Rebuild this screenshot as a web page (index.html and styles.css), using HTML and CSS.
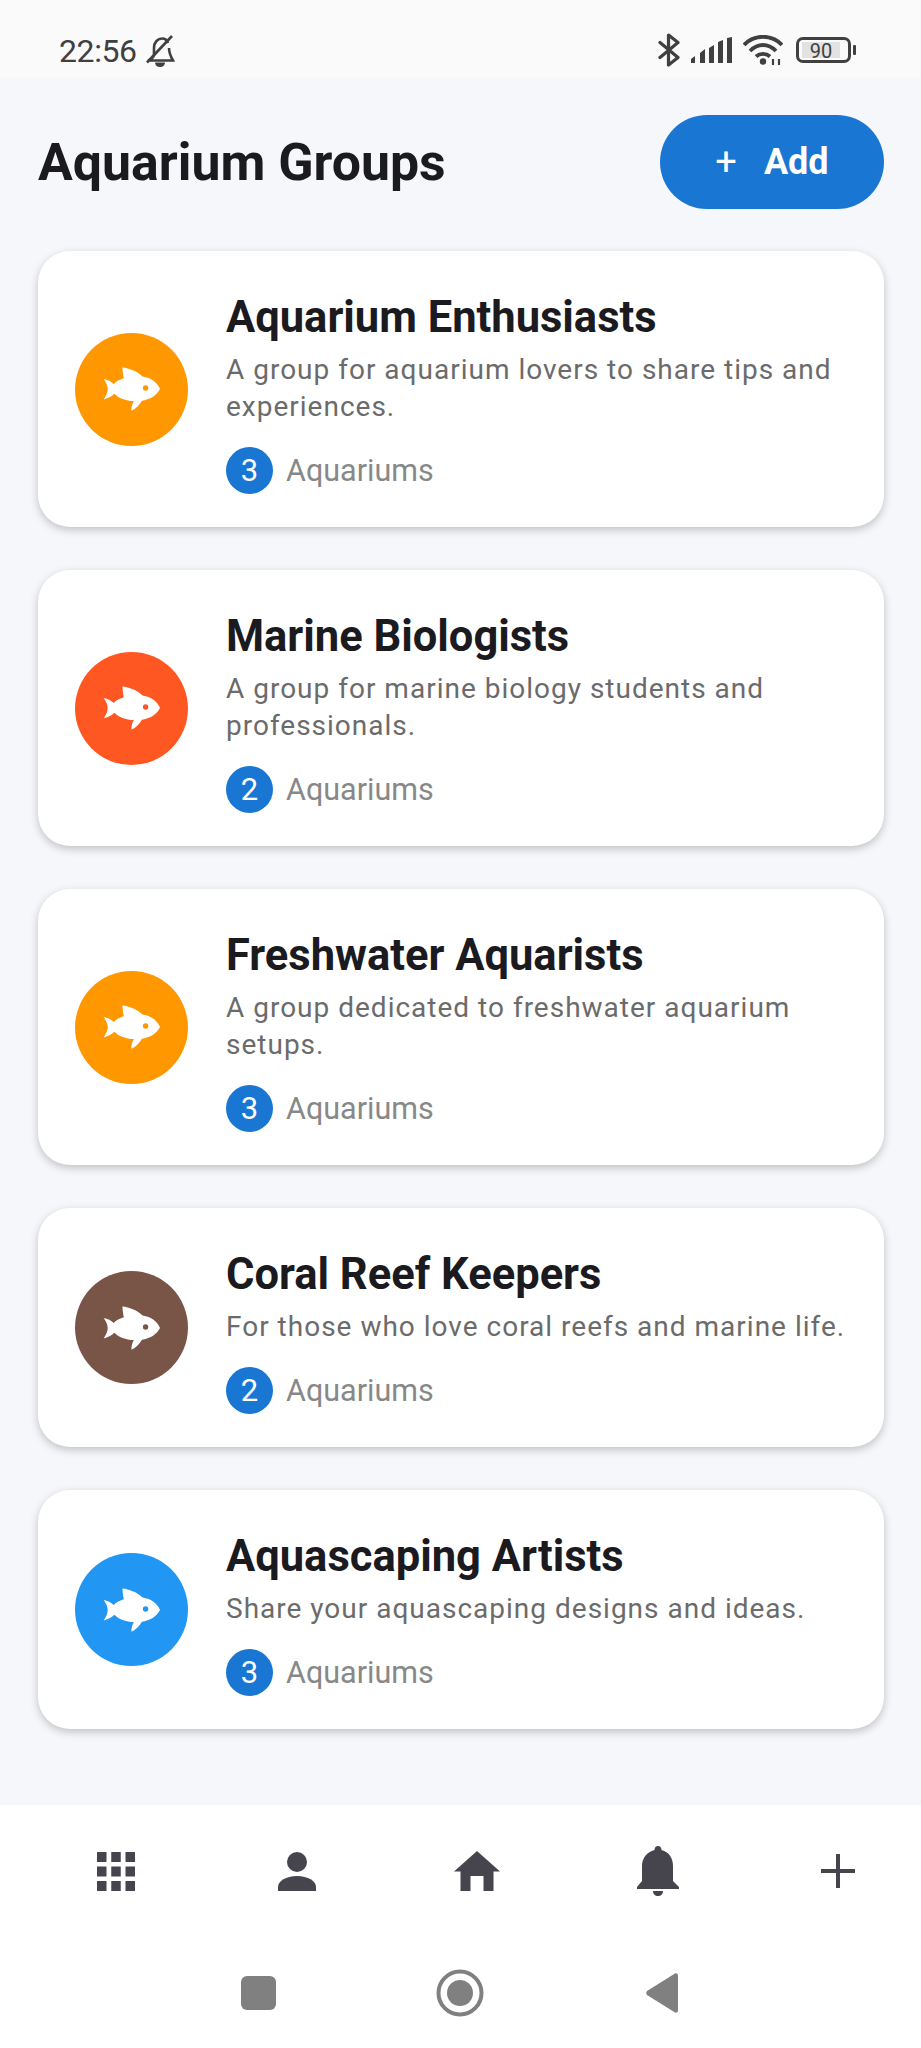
FILE: index.html
```html
<!DOCTYPE html>
<html>
	<head>
		<title>Aquarium Groups</title>
		<link rel="stylesheet" href="styles.css">
	</head>
	<body>
		<svg class="defs" width="0" height="0">
			<symbol id="fish" viewBox="0 0 170 130">
				<path fill-rule="evenodd" d="M2 35C14 37 24 42 32 50C38 43 48 37 62 33C60 22 58 10 58 1C78 3 100 11 118 28C144 32 162 46 170 65C160 84 140 97 116 100C108 113 98 124 85 130C84 120 87 110 92 101C68 100 46 92 34 79C25 87 14 93 2 96C9 86 14 76 14 65C14 55 9 45 2 35ZM127 54A8 8 0 1 0 127 70A8 8 0 1 0 127 54Z"/>
			</symbol>
		</svg>

		<div class="status">
			<span class="time">22:56</span>
			<svg class="mute" viewBox="0 0 30 32">
				<path d="M9 21V13C9 7 13 3.500 17 3.500C20 3.500 22 5 23 8M24 13C24 18 26 22 28 25.500H3C5 25 7 24 9 21" fill="none" stroke="#404040" stroke-width="2.600"/>
				<path d="M2 27.500L27 1" stroke="#404040" stroke-width="2.600"/>
				<path d="M10 27.500H20C20 30 18 32 15 32C12 32 10 30 10 27.500Z" fill="#404040"/>
			</svg>
			<div class="status-right">
				<svg class="bt" viewBox="0 0 22 34">
					<path d="M2 9.500L20 24.500L10.500 32V2L20 9.500L2 24.500" fill="none" stroke="#404040" stroke-width="3.200" stroke-linejoin="round" stroke-linecap="round"/>
				</svg>
				<svg class="signal" viewBox="0 0 42 26">
					<path d="M0 26V22L4 19V26ZM9 26V16L14 12V26ZM18 26V11L23 8V26ZM27 26V5L32 3V26ZM36 26V1L41 0V26Z" fill="#404040"/>
				</svg>
				<svg class="wifi" viewBox="0 0 40 30">
					<path d="M1 10C11 -1 29 -1 39 10M7 16C15 8 25 8 33 16M13 21.500C17 18 23 18 27 21.500" fill="none" stroke="#404040" stroke-width="3.800"/>
					<circle cx="20" cy="26.500" r="3.200" fill="#404040"/>
					<path d="M30 24V30M36 24V30" stroke="#404040" stroke-width="2.200"/>
				</svg>
				<div class="battery"><span class="battery-fill">90</span></div>
				<div class="battery-tip"></div>
			</div>
		</div>

		<div class="main">
			<div class="header">
				<h1>Aquarium Groups</h1>
				<div class="add-btn"><span class="add-plus">+</span>Add</div>
			</div>

			<div class="card">
				<div class="avatar orange"><svg class="fish"><use href="#fish"/></svg></div>
				<div class="info">
					<h2>Aquarium Enthusiasts</h2>
					<p>A group for aquarium lovers to share tips and experiences.</p>
					<div class="count"><span class="badge">3</span>Aquariums</div>
				</div>
			</div>

			<div class="card">
				<div class="avatar red"><svg class="fish"><use href="#fish"/></svg></div>
				<div class="info">
					<h2>Marine Biologists</h2>
					<p>A group for marine biology students and professionals.</p>
					<div class="count"><span class="badge">2</span>Aquariums</div>
				</div>
			</div>

			<div class="card">
				<div class="avatar orange"><svg class="fish"><use href="#fish"/></svg></div>
				<div class="info">
					<h2>Freshwater Aquarists</h2>
					<p>A group dedicated to freshwater aquarium setups.</p>
					<div class="count"><span class="badge">3</span>Aquariums</div>
				</div>
			</div>

			<div class="card">
				<div class="avatar brown"><svg class="fish"><use href="#fish"/></svg></div>
				<div class="info">
					<h2>Coral Reef Keepers</h2>
					<p>For those who love coral reefs and marine life.</p>
					<div class="count"><span class="badge">2</span>Aquariums</div>
				</div>
			</div>

			<div class="card">
				<div class="avatar blue"><svg class="fish"><use href="#fish"/></svg></div>
				<div class="info">
					<h2>Aquascaping Artists</h2>
					<p>Share your aquascaping designs and ideas.</p>
					<div class="count"><span class="badge">3</span>Aquariums</div>
				</div>
			</div>
		</div>

		<div class="tabs">
			<div class="tab">
				<svg width="38" height="39" viewBox="0 0 38 39" fill="#46454d">
					<path d="M0 0H9.500V10H0ZM14.250 0H23.750V10H14.250ZM28.500 0H38V10H28.500ZM0 14.500H9.500V24.500H0ZM14.250 14.500H23.750V24.500H14.250ZM28.500 14.500H38V24.500H28.500ZM0 29H9.500V39H0ZM14.250 29H23.750V39H14.250ZM28.500 29H38V39H28.500Z"/>
				</svg>
			</div>
			<div class="tab">
				<svg width="38" height="39" viewBox="0 0 38 39" fill="#46454d">
					<ellipse cx="19" cy="10" rx="10" ry="10"/>
					<path d="M0 39V35C0 29 8 24 19 24C30 24 38 29 38 35V39Z"/>
				</svg>
			</div>
			<div class="tab">
				<svg width="46" height="40" viewBox="0 0 46 40" fill="#46454d">
					<path d="M23 0L46 20.500H39.500V40H29.500V25H16.500V40H6.500V20.500H0Z"/>
				</svg>
			</div>
			<div class="tab">
				<svg width="44" height="50" viewBox="0 0 44 50" fill="#46454d">
					<path d="M22 0C24 0 25.500 1.500 25.500 4C33 6 37 12 37 20V35L43 41V43H1V41L6 35V20C6 12 11 6 18.500 4C18.500 1.500 20 0 22 0Z"/>
					<path d="M17 45H27C27 48 25 50 22 50C19 50 17 48 17 45Z"/>
				</svg>
			</div>
			<div class="tab">
				<svg width="34" height="34" viewBox="0 0 34 34" fill="#46454d">
					<path d="M15 0H19V15H34V19H19V34H15V19H0V15H15Z"/>
				</svg>
			</div>
		</div>

		<div class="sysnav">
			<div class="sys-square"></div>
			<svg width="48" height="48" viewBox="0 0 48 48" fill="#808080">
				<circle cx="24" cy="24" r="21.500" fill="none" stroke="#808080" stroke-width="4"/>
				<circle cx="24" cy="24" r="13"/>
			</svg>
			<svg width="32" height="40" viewBox="0 0 32 40" fill="#808080">
				<path d="M29 0.500C31 0 32 1 32 3V37C32 39 31 40 29 39.500L1 22C0 21 0 19 1 18Z"/>
			</svg>
		</div>
	</body>
</html>
```

FILE: styles.css
```css
* {
	box-sizing: border-box;
}

html, body {
	margin: 0;
	padding: 0;
}

body {
	width: 921px;
	height: 2048px;
	overflow: hidden;
	background: #f5f7fb;
	font-family: Roboto, "Liberation Sans", sans-serif;
	display: flex;
	flex-direction: column;
}

.defs {
	position: absolute;
}

.status {
	height: 78px;
	background: #fafafa;
	display: flex;
	align-items: center;
	padding: 24px 65px 0 59px;
	flex-shrink: 0;
}

.time {
	font-size: 32px;
	color: #404040;
	letter-spacing: -0.4px;
}

.mute {
	width: 30px;
	height: 32px;
	margin-left: 8px;
}

.status-right {
	margin-left: auto;
	margin-bottom: 2px;
	display: flex;
	align-items: center;
}

.bt {
	width: 22px;
	height: 34px;
	margin-right: 11px;
}

.signal {
	width: 42px;
	height: 26px;
	margin-right: 10px;
}

.wifi {
	width: 40px;
	height: 30px;
	margin-right: 13px;
}

.battery {
	width: 55px;
	height: 26px;
	border: 3px solid #404040;
	border-radius: 7px;
	padding: 2px 3px;
	display: flex;
}

.battery-fill {
	background: #e2e2e2;
	flex: 1;
	margin-right: 5px;
	font-size: 20px;
	line-height: 18px;
	text-align: center;
	color: #404040;
}

.battery-tip {
	width: 3px;
	height: 10px;
	margin-left: 2px;
	background: #404040;
	border-radius: 1px;
}

.main {
	flex: 1;
	padding: 37px 37px 0 38px;
}

.header {
	display: flex;
	justify-content: space-between;
	align-items: center;
	margin-bottom: 42px;
}

h1 {
	margin: 0;
	font-size: 51.800px;
	font-weight: 700;
	color: #1a1a1f;
}

.add-btn {
	width: 224px;
	height: 94px;
	border-radius: 47px;
	background: #1976d2;
	color: #fff;
	font-size: 36px;
	font-weight: 700;
	display: flex;
	align-items: center;
	justify-content: center;
}

.add-plus {
	font-weight: 400;
	font-size: 38px;
	margin-right: 27px;
}

.card {
	background: #fff;
	border-radius: 32px;
	box-shadow: 0 3px 8px rgba(0, 0, 0, 0.22);
	display: flex;
	align-items: center;
	padding: 42px 28px 33px 37px;
	margin-bottom: 43px;
}

.avatar {
	width: 113px;
	height: 113px;
	border-radius: 50%;
	flex-shrink: 0;
	margin-right: 38px;
	margin-bottom: 9px;
	display: flex;
	align-items: center;
	justify-content: center;
}

.orange { background: #ff9800; }
.red { background: #ff5722; }
.brown { background: #795548; }
.blue { background: #2196f3; }

.fish {
	width: 57px;
	height: 44px;
	fill: #fff;
}

.info {
	flex: 1;
}

h2 {
	margin: 0 0 8px 0;
	font-size: 43.500px;
	line-height: 50px;
	font-weight: 700;
	color: #1a1a1f;
}

p {
	margin: 0 0 22px 0;
	font-size: 28px;
	line-height: 37px;
	letter-spacing: 1px;
	color: #6b6b6b;
}

.count {
	display: flex;
	align-items: center;
	font-size: 30.500px;
	color: #888;
}

.badge {
	width: 47px;
	height: 47px;
	border-radius: 50%;
	background: #1976d2;
	color: #fff;
	font-size: 31px;
	display: flex;
	align-items: center;
	justify-content: center;
	margin-right: 13px;
}

.tabs {
	height: 132px;
	background: #fff;
	display: grid;
	grid-template-columns: repeat(5, 180.500px);
	padding-left: 26px;
	flex-shrink: 0;
	align-items: center;
}

.tab {
	display: flex;
	justify-content: center;
}

.sysnav {
	height: 111px;
	background: #fff;
	display: flex;
	align-items: center;
	padding-left: 241px;
	flex-shrink: 0;
}

.sys-square {
	width: 35px;
	height: 34px;
	border-radius: 6px;
	background: #808080;
	margin-right: 160px;
}

.sysnav svg:last-child {
	margin-left: 162px;
}
```
